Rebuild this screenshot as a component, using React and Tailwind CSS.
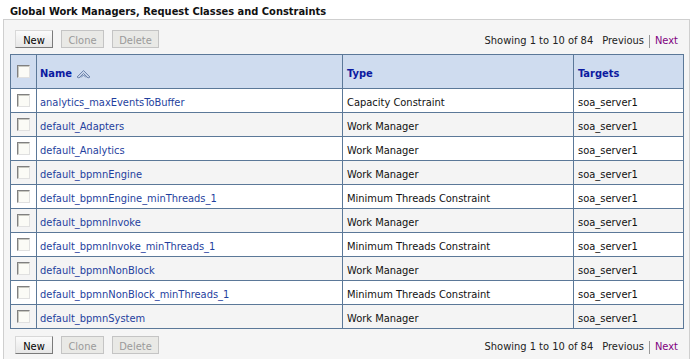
// App.jsx

import React from 'react';

const rows = [
  { name: 'analytics_maxEventsToBuffer', type: 'Capacity Constraint' },
  { name: 'default_Adapters', type: 'Work Manager' },
  { name: 'default_Analytics', type: 'Work Manager' },
  { name: 'default_bpmnEngine', type: 'Work Manager' },
  { name: 'default_bpmnEngine_minThreads_1', type: 'Minimum Threads Constraint' },
  { name: 'default_bpmnInvoke', type: 'Work Manager' },
  { name: 'default_bpmnInvoke_minThreads_1', type: 'Minimum Threads Constraint' },
  { name: 'default_bpmnNonBlock', type: 'Work Manager' },
  { name: 'default_bpmnNonBlock_minThreads_1', type: 'Minimum Threads Constraint' },
  { name: 'default_bpmnSystem', type: 'Work Manager' },
];

// old-school sunken checkbox
const Check = () => (
  <span className="block w-[13px] h-[13px] border border-t-[#808080] border-l-[#808080] border-b-[#e0e0e0] border-r-[#e0e0e0] bg-[#fbfbf6] shadow-[inset_1px_1px_0_#c8c8c0]"></span>
);

const Btn = ({ children, disabled, w }) => (
  <button
    className={
      w + ' ' +
      (disabled
        ? 'h-[18px] pt-[2px] border border-[#c4c4c4] bg-[#e9e9e6] text-[#9a9a9a] leading-none'
        : 'h-[18px] pt-[2px] border border-t-[#d8d8d8] border-l-[#d8d8d8] border-b-[#7a7a7a] border-r-[#7a7a7a] bg-gradient-to-b from-[#fbfbfb] to-[#e6e6e6] text-black leading-none')
    }
  >
    {children}
  </button>
);

const Toolbar = ({ className }) => (
  <div className={'flex items-center justify-between h-[18px] box-content pl-[11px] pr-[11px] ' + className}>
    <div className="flex gap-[8px]">
      <Btn w="w-[38px]">New</Btn>
      <Btn w="w-[43px]" disabled>Clone</Btn>
      <Btn w="w-[47px]" disabled>Delete</Btn>
    </div>
    <div className="flex items-center pt-[4px] leading-[14px] text-[#222]">
      <span>Showing 1 to 10 of 84</span>
      <span className="ml-[9px]">Previous</span>
      <span className="mx-[5px] w-px h-[13px] bg-[#999]"></span>
      <a href="#" className="text-[#800080]">Next</a>
    </div>
  </div>
);

const SortIcon = () => (
  <svg width="15" height="10" viewBox="0 0 15 10">
    <path d="M1 8 L7.5 1.5 L14 8 L12 9 L7.5 4.5 L3 9 Z" fill="#c6d3e8" stroke="#6f86ad" strokeWidth="1" strokeLinejoin="round" />
    <path d="M5 8.5 L7.5 6 L10 8.5" fill="none" stroke="#6f86ad" strokeWidth="1" />
  </svg>
);

export default function App() {
  return (
    <div className="w-[693px] h-[359px] bg-white overflow-hidden text-[11px] font-['DejaVu_Sans_Condensed','Liberation_Sans',sans-serif]">
      <h2 className="pl-[10px] pt-[5px] h-[19px] font-bold text-[11px] text-[#111] leading-[14px]">
        Global Work Managers, Request Classes and Constraints
      </h2>
      <div className="ml-[3px] mr-[3px] h-[340px] border border-[#cfcfcf] border-b-0 bg-[#f5f5f5]">
        <Toolbar className="pt-[10px]" />
        <table className="mt-[6px] ml-[6px] w-[674px] border-collapse border border-[#5b7898] leading-[14px]">
          <thead>
            <tr className="h-[34px] bg-[#cfdcef] text-[#0c1aa0] font-bold text-left">
              <th className="w-[26px] border border-[#5b7898] pl-[6px]">
                <Check />
              </th>
              <th className="w-[306px] border border-[#5b7898] pl-[3px] pt-[4px]">
                <span className="inline-flex items-center gap-[4px]">
                  Name
                  <SortIcon />
                </span>
              </th>
              <th className="w-[231px] border border-[#5b7898] pl-[4px] pt-[4px]">Type</th>
              <th className="border border-[#5b7898] pl-[4px] pt-[4px]">Targets</th>
            </tr>
          </thead>
          <tbody>
            {rows.map((r, i) => (
              <tr key={r.name} className={'h-[24px] ' + (i % 2 ? 'bg-[#f4f4f4]' : 'bg-white')}>
                <td className="border border-[#5b7898] pl-[6px]">
                  <Check />
                </td>
                <td className="border border-[#5b7898] pl-[3px] pt-[4px]">
                  <a href="#" className="text-[#1f3f9e]">{r.name}</a>
                </td>
                <td className="border border-[#5b7898] pl-[4px] pt-[4px] text-[#111]">{r.type}</td>
                <td className="border border-[#5b7898] pl-[4px] pt-[4px] text-[#111]">soa_server1</td>
              </tr>
            ))}
          </tbody>
        </table>
        <Toolbar className="pt-[7px]" />
      </div>
    </div>
  );
}
